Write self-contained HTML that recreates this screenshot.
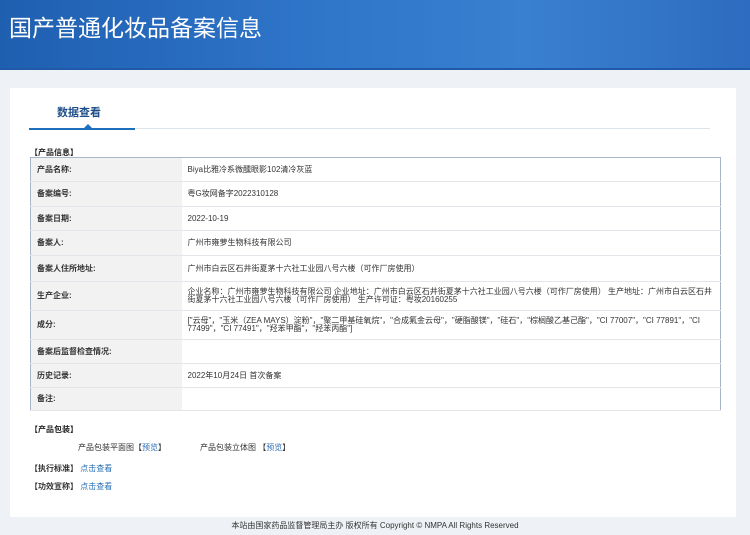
<!DOCTYPE html>
<html><head><meta charset="utf-8"><style>
*{margin:0;padding:0;box-sizing:border-box}
body{width:750px;height:535px;background:#eef1f5;font-family:"Liberation Sans","Noto Sans CJK SC",sans-serif;font-size:8px;color:#333;position:relative;overflow:hidden}
.hd{position:absolute;left:0;top:0;width:750px;height:70px;background:linear-gradient(90deg,#1f5fb0,#2e74c8 40%,#3a80d0 70%,#2d6cbf);border-bottom:2px solid #1e5aa8}
.hd h1{position:absolute;left:9px;top:9px;font-size:23px;font-weight:normal;color:#fff;letter-spacing:0px}
.panel{position:absolute;left:10px;top:88px;width:726px;height:429px;background:#fff}
.tab{position:absolute;left:47px;top:16px;font-size:11px;font-weight:bold;color:#1f4f8a}
.line{position:absolute;left:19px;top:40px;width:681px;height:1px;background:#dde3ea}
.line2{position:absolute;left:19px;top:40px;width:106px;height:2px;background:#1f6fbf}
.tri{position:absolute;left:74px;top:36px;width:0;height:0;border-left:4px solid transparent;border-right:4px solid transparent;border-bottom:4px solid #1f6fbf}
.sec{position:absolute;font-weight:bold;color:#222;font-size:8px}
table{position:absolute;left:20px;top:69px;width:691px;border-collapse:collapse;border:1px solid #a9b6c8}
td{border-bottom:1px solid #e2e6ea;padding:0 6px;line-height:8px;vertical-align:middle}
td.l{width:151px;background:#f2f2f2;font-weight:bold;padding-left:6px}
a{color:#2a6fb5;text-decoration:none}
.ft{position:absolute;top:520px;left:0;width:750px;text-align:center;font-size:8px;color:#333}
</style></head><body>
<div class="hd"><h1>国产普通化妆品备案信息</h1></div>
<div class="panel">
<div class="tab">数据查看</div>
<div class="line"></div><div class="line2"></div><div class="tri"></div>
<div class="sec" style="left:20px;top:59px">【产品信息】</div>
<table>
<tr style="height:24px"><td class="l">产品名称:</td><td>Biya比雅冷系微醺眼影102清冷灰蓝</td></tr>
<tr style="height:25px"><td class="l">备案编号:</td><td>粤G妆网备字2022310128</td></tr>
<tr style="height:24px"><td class="l">备案日期:</td><td>2022-10-19</td></tr>
<tr style="height:25px"><td class="l">备案人:</td><td>广州市雍萝生物科技有限公司</td></tr>
<tr style="height:26px"><td class="l">备案人住所地址:</td><td>广州市白云区石井街夏茅十六社工业园八号六楼（可作厂房使用）</td></tr>
<tr style="height:29px"><td class="l">生产企业:</td><td>企业名称：广州市雍萝生物科技有限公司 企业地址：广州市白云区石井街夏茅十六社工业园八号六楼（可作厂房使用） 生产地址：广州市白云区石井街夏茅十六社工业园八号六楼（可作厂房使用） 生产许可证：粤妆20160255</td></tr>
<tr style="height:29px"><td class="l">成分:</td><td>["云母"，"玉米（ZEA MAYS）淀粉"，"聚二甲基硅氧烷"，"合成氟金云母"，"硬脂酸镁"，"硅石"，"棕榈酸乙基己酯"，"CI 77007"，"CI 77891"，"CI 77499"，"CI 77491"，"羟苯甲酯"，"羟苯丙酯"]</td></tr>
<tr style="height:24px"><td class="l">备案后监督检查情况:</td><td></td></tr>
<tr style="height:24px"><td class="l">历史记录:</td><td>2022年10月24日 首次备案</td></tr>
<tr style="height:23px"><td class="l">备注:</td><td></td></tr>
</table>
<div class="sec" style="left:20px;top:336px">【产品包装】</div>
<div style="position:absolute;left:68px;top:354px">产品包装平面图【<a>预览</a>】</div>
<div style="position:absolute;left:190px;top:354px">产品包装立体图 【<a>预览</a>】</div>
<div style="position:absolute;left:20px;top:375px"><b>【执行标准】</b> <a>点击查看</a></div>
<div style="position:absolute;left:20px;top:393px"><b>【功效宣称】</b> <a>点击查看</a></div>
</div>
<div class="ft">本站由国家药品监督管理局主办 版权所有 Copyright © NMPA All Rights Reserved</div>
</body></html>
